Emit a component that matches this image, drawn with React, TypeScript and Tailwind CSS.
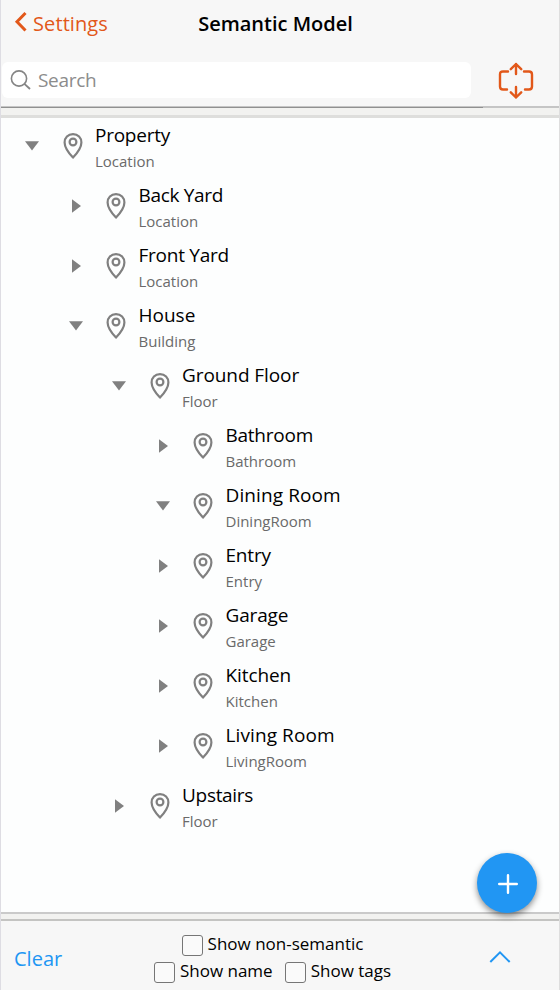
type Item = { name: string; kind: string; level: number; open?: boolean; tracking?: string };

const items: Item[] = [
  { name: "Property", kind: "Location", level: 0, open: true, tracking: "tracking-[-0.25px]" },
  { name: "Back Yard", kind: "Location", level: 1, tracking: "tracking-[-0.33px]" },
  { name: "Front Yard", kind: "Location", level: 1, tracking: "tracking-[-0.25px]" },
  { name: "House", kind: "Building", level: 1, open: true },
  { name: "Ground Floor", kind: "Floor", level: 2, open: true, tracking: "tracking-[-0.08px]" },
  { name: "Bathroom", kind: "Bathroom", level: 3, tracking: "tracking-[-0.25px]" },
  { name: "Dining Room", kind: "DiningRoom", level: 3, open: true, tracking: "tracking-[0.1px]" },
  { name: "Entry", kind: "Entry", level: 3, tracking: "tracking-[-0.2px]" },
  { name: "Garage", kind: "Garage", level: 3, tracking: "tracking-[-0.15px]" },
  { name: "Kitchen", kind: "Kitchen", level: 3, tracking: "tracking-[-0.1px]" },
  { name: "Living Room", kind: "LivingRoom", level: 3, tracking: "tracking-[0.1px]" },
  { name: "Upstairs", kind: "Floor", level: 2, tracking: "tracking-[-0.3px]" },
];

const indents = ["pl-[22px]", "pl-[65.5px]", "pl-[109px]", "pl-[152.5px]"];

function Pin() {
  return (
    <svg className="ml-[21.5px] mt-[11px] h-[26px] w-[20px] shrink-0" viewBox="0 0 20 26" fill="none" stroke="#808080" strokeWidth="2.2">
      <path d="M10 1.1C5 1.1 1.6 4.7 1.6 9.4C1.6 14.4 5.4 19.6 10 24.6C14.6 19.6 18.4 14.4 18.4 9.4C18.4 4.7 15 1.1 10 1.1Z" strokeLinejoin="round" />
      <circle cx="10" cy="9" r="3.4" />
    </svg>
  );
}

function Row({ item }: { item: Item }) {
  return (
    <div className={`flex h-[60px] items-start pt-1 ${indents[item.level]}`}>
      <svg className="mt-[15px] h-[18px] w-[18px] shrink-0" viewBox="0 0 18 18" fill="#808080">
        <path d={item.open ? "M2 4.3H16L9 13.5Z" : "M5 2.3V15.7L14 9Z"} />
      </svg>
      <Pin />
      <div className="ml-[12.5px] whitespace-nowrap">
        <div className={`text-[19px] leading-[26px] text-black ${item.tracking ?? ""}`}>{item.name}</div>
        <div className="text-[15px] leading-[26px] text-[#6a6a6a]">{item.kind}</div>
      </div>
    </div>
  );
}

function Check({ label }: { label: string }) {
  return (
    <label className="flex items-center gap-[5px] whitespace-nowrap text-[17px] leading-[27px] text-black">
      <span className="mt-[3px] h-[21px] w-[21px] rounded-[3px] border border-[#767676] bg-[#fafafa]" />
      {label}
    </label>
  );
}

export default function App() {
  return (
    <div className="relative flex h-[990px] w-[560px] flex-col overflow-hidden border-x border-l-[#dedde3] border-r-[#dedede] bg-[#f7f7f7] font-['Open_Sans','Noto_Sans',sans-serif]">
      <header className="h-[106px] shrink-0">
        <div className="grid h-[61px] grid-cols-[1fr_auto_1fr] items-start pt-[10px]">
          <div className="flex text-[20px] leading-[28px] text-[#e2581a]">
            <svg className="ml-[13px] mt-[1px] h-[22px] w-[14px]" viewBox="0 0 14 22" fill="none" stroke="#e2581a" strokeWidth="3">
              <path d="M11.5 2L3 10.8L11.5 19.5" />
            </svg>
            <span className="ml-[5px] tracking-[0.1px]">Settings</span>
          </div>
          <h1 className="mr-[9px] text-[20px] font-semibold leading-[28px] text-black">Semantic Model</h1>
        </div>
        <div className="flex items-center">
          <div className="ml-[1px] flex h-[36px] w-[469px] items-center rounded-[6px] bg-white text-[19px] text-[#8c8c8c]">
            <svg className="ml-[8px] h-[20px] w-[21px]" viewBox="0 0 21 20" fill="none" stroke="#858585" strokeWidth="1.6">
              <circle cx="9" cy="8.5" r="7.6" />
              <path d="M14.4 13.9L20 19" strokeWidth="1.9" />
            </svg>
            <span className="ml-[7px] tracking-[-0.3px]">Search</span>
          </div>
          <svg className="ml-[27px] h-[38px] w-[36px]" viewBox="0 0 36 38" fill="none" stroke="#e2581a" strokeWidth="2.4" strokeLinecap="round" strokeLinejoin="round">
            <path d="M10 10.5H5Q2 10.5 2 13.5V25.5Q2 28.5 5 28.5H9M26 10.5H31Q34 10.5 34 13.5V25.5Q34 28.5 31 28.5H27" />
            <path d="M18 13V3M12.8 8.2L18 3L23.2 8.2M18 26V36.5M12.8 31.3L18 36.5L23.2 31.3" />
          </svg>
        </div>
      </header>
      <div className="flex h-[2px] shrink-0 bg-[#c5c5c5]">
        <div className="mt-[1px] h-[1px] w-[482px] bg-[#909090]" />
      </div>
      <div className="h-[7px] shrink-0 bg-[#f2f2f0]" />
      <div className="h-[3px] shrink-0 bg-[#dededc]" />
      <main className="h-[794px] shrink-0 bg-[#fdfefe]">
        {items.map((item) => (
          <Row key={item.name} item={item} />
        ))}
      </main>
      <div className="h-[9px] shrink-0 border-b-2 border-t-2 border-b-[#c4c4c2] border-t-[#cacaca] bg-[#f2f2f0]" />
      <footer className="flex h-[69px] shrink-0">
        <div className="w-[152px] pl-[13px] pt-[24px] text-[20px] leading-[28px] text-[#2196f3]">Clear</div>
        <div className="flex w-[239px] flex-col items-center pt-[9px]">
          <Check label="Show non-semantic" />
          <div className="flex gap-[12px]">
            <Check label="Show name" />
            <Check label="Show tags" />
          </div>
        </div>
        <svg className="ml-[97px] mt-[29px] h-[14px] w-[22px]" viewBox="0 0 22 14" fill="none" stroke="#2196f3" strokeWidth="2">
          <path d="M1.3 12L11 2.3L20.7 12" />
        </svg>
      </footer>
      <button className="absolute left-[476px] top-[853px] flex h-[60px] w-[60px] items-center justify-center rounded-full bg-[#2196f3] shadow-[0_3px_6px_rgba(0,0,0,0.45)]">
        <svg className="ml-[1px] mt-[2px] h-[20px] w-[20px]" viewBox="0 0 20 20" stroke="white" strokeWidth="2.4" strokeLinecap="round">
          <path d="M10 1.2V18.8M1.2 10H18.8" />
        </svg>
      </button>
    </div>
  );
}
